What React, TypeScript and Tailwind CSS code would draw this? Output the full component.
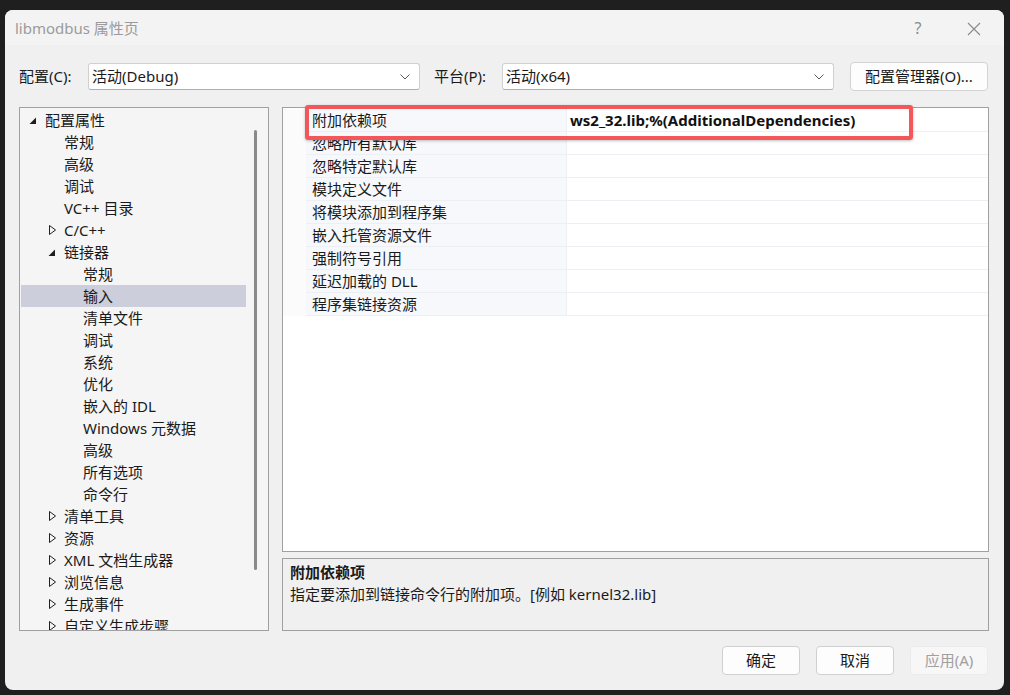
import React from 'react';

type TreeItem = {
  label: string;
  level: 0 | 1 | 2;
  state?: 'open' | 'closed';
  selected?: boolean;
};

const treeItems: TreeItem[] = [
  { label: '配置属性', level: 0, state: 'open' },
  { label: '常规', level: 1 },
  { label: '高级', level: 1 },
  { label: '调试', level: 1 },
  { label: 'VC++ 目录', level: 1 },
  { label: 'C/C++', level: 1, state: 'closed' },
  { label: '链接器', level: 1, state: 'open' },
  { label: '常规', level: 2 },
  { label: '输入', level: 2, selected: true },
  { label: '清单文件', level: 2 },
  { label: '调试', level: 2 },
  { label: '系统', level: 2 },
  { label: '优化', level: 2 },
  { label: '嵌入的 IDL', level: 2 },
  { label: 'Windows 元数据', level: 2 },
  { label: '高级', level: 2 },
  { label: '所有选项', level: 2 },
  { label: '命令行', level: 2 },
  { label: '清单工具', level: 1, state: 'closed' },
  { label: '资源', level: 1, state: 'closed' },
  { label: 'XML 文档生成器', level: 1, state: 'closed' },
  { label: '浏览信息', level: 1, state: 'closed' },
  { label: '生成事件', level: 1, state: 'closed' },
  { label: '自定义生成步骤', level: 1, state: 'closed' },
];

const levelPad = ['pl-[8px]', 'pl-[27px]', 'pl-[46px]'];

const gridRows = [
  { name: '附加依赖项', value: 'ws2_32.lib;%(AdditionalDependencies)' },
  { name: '忽略所有默认库', value: '' },
  { name: '忽略特定默认库', value: '' },
  { name: '模块定义文件', value: '' },
  { name: '将模块添加到程序集', value: '' },
  { name: '嵌入托管资源文件', value: '' },
  { name: '强制符号引用', value: '' },
  { name: '延迟加载的 DLL', value: '' },
  { name: '程序集链接资源', value: '' },
];

const Expander = ({ state }: { state?: 'open' | 'closed' }) => {
  if (state === 'open') {
    return (
      <svg width="8" height="8" viewBox="0 0 8 8" className="mt-[1px]">
        <polygon points="7,0.5 7,7 0.5,7" fill="#1e1e1e" />
      </svg>
    );
  }
  if (state === 'closed') {
    return (
      <svg width="8" height="10" viewBox="0 0 8 10" className="ml-[1px]">
        <polygon points="0.5,0.5 6.5,5 0.5,9.5" fill="none" stroke="#1e1e1e" strokeWidth="1" />
      </svg>
    );
  }
  return null;
};

const Chevron = () => (
  <svg width="12" height="8" viewBox="0 0 12 8">
    <polyline points="1.5,1.5 6,6 10.5,1.5" fill="none" stroke="#5a5a5a" strokeWidth="1" />
  </svg>
);

const Select = ({ value }: { value: string }) => (
  <div className="w-[332px] h-[27px] bg-white border border-[#d0d0d0] border-b-[#b0b0b0] rounded-[3px] flex items-center justify-between pl-[3px] pr-[8px]">
    <span className="text-[15px] text-[#1a1a1a]">{value}</span>
    <Chevron />
  </div>
);

export default function App() {
  return (
    <div
      className="w-[1010px] h-[695px] bg-[#1f1f1f] pt-[10px] pl-[5px] overflow-hidden"
      style={{ fontFamily: '"Noto Sans", "Noto Sans CJK SC", sans-serif' }}
    >
      <div className="w-[999px] h-[680px] rounded-[8px] bg-[#f0f0f0] overflow-hidden flex flex-col">
        {/* Title bar */}
        <div className="h-[35px] bg-[#f3f3f3] relative">
          <div className="absolute left-[10px] top-[8px] text-[15px] leading-[20px] text-[#9b9b9b]">
            libmodbus 属性页
          </div>
          <div className="absolute left-[902px] top-[7px] w-[22px] text-center text-[16px] leading-[22px] text-[#8c8c8c]">
            ?
          </div>
          <svg className="absolute left-[962px] top-[12px]" width="14" height="14" viewBox="0 0 14 14">
            <path d="M1 1 L13 13 M13 1 L1 13" stroke="#8a8a8a" strokeWidth="1.1" />
          </svg>
        </div>

        {/* Configuration row */}
        <div className="flex items-center h-[29px] mt-[17px] pl-[14px]">
          <span className="w-[69px] text-[15px] text-[#1a1a1a]">配置(C):</span>
          <Select value="活动(Debug)" />
          <span className="w-[68px] ml-[14px] text-[15px] text-[#1a1a1a]">平台(P):</span>
          <Select value="活动(x64)" />
          <button className="ml-[16px] w-[138px] h-[29px] bg-[#fdfdfd] border border-[#d3d3d3] rounded-[4px] text-[15px] text-[#1a1a1a]">
            配置管理器(O)...
          </button>
        </div>

        {/* Main area */}
        <div className="flex mt-[16px] pl-[14px] h-[524px]">
          {/* Tree */}
          <div className="w-[250px] h-[524px] border border-[#a0a0a0] bg-[#f5f5f5] flex overflow-hidden">
            <div className="w-[226px] pt-[1px] pl-[1px]">
              {treeItems.map((item, i) => (
                <div
                  key={i}
                  className={`h-[22px] flex items-center ${levelPad[item.level]} ${
                    item.selected ? 'bg-[#cccedb]' : ''
                  }`}
                >
                  <div className="w-[16px] flex items-center">
                    <Expander state={item.state} />
                  </div>
                  <span className="text-[15px] text-[#1a1a1a] whitespace-nowrap">{item.label}</span>
                </div>
              ))}
            </div>
            <div className="w-[22px] pl-[8px] pt-[22px]">
              <div className="w-[3px] h-[440px] rounded-full bg-[#8a8a8a]" />
            </div>
          </div>

          {/* Right column */}
          <div className="ml-[13px] w-[707px] flex flex-col">
            <div className="h-[445px] bg-white border border-[#a0a0a0] pt-[1px] relative">
              {gridRows.map((row, i) => (
                <div key={i} className="h-[23px] flex">
                  <div className="w-[23px] bg-[#fbfbfb]" />
                  <div className="w-[260px] bg-[#f6f8fb] border-b border-[#eceff4] flex items-center pl-[6px] text-[15px] text-[#1a1a1a] whitespace-nowrap">
                    {row.name}
                  </div>
                  <div className="flex-1 border-b border-l border-[#eceff4] flex items-center pl-[3px] text-[15px] font-bold text-[#111] whitespace-nowrap">
                    {row.value}
                  </div>
                </div>
              ))}
              {/* red annotation */}
              <div className="absolute left-[22px] top-[-3px] w-[608px] h-[35px] border-[4px] border-[#f4575a] rounded-[3px] shadow-[0_1px_3px_rgba(0,0,0,0.25)]" />
            </div>

            <div className="mt-[6px] h-[73px] border border-[#a0a0a0] bg-[#f0f0f0] pt-[2px] pl-[7px]">
              <div className="h-[22px] flex items-center text-[15px] font-bold text-[#1a1a1a]">附加依赖项</div>
              <div className="h-[22px] flex items-center text-[15px] text-[#1a1a1a]">
                指定要添加到链接命令行的附加项。[例如 kernel32.lib]
              </div>
            </div>
          </div>
        </div>

        {/* Buttons */}
        <div className="flex justify-end gap-[16px] mt-[15px] pr-[16px]">
          <button className="w-[78px] h-[29px] bg-[#fdfdfd] border border-[#d0d0d0] rounded-[4px] text-[15px] text-[#1a1a1a]">
            确定
          </button>
          <button className="w-[78px] h-[29px] bg-[#fdfdfd] border border-[#d0d0d0] rounded-[4px] text-[15px] text-[#1a1a1a]">
            取消
          </button>
          <button className="w-[78px] h-[29px] bg-[#f7f7f7] border border-[#ebebeb] rounded-[4px] text-[15px] text-[#a0a0a0]">
            应用(A)
          </button>
        </div>
      </div>
    </div>
  );
}
